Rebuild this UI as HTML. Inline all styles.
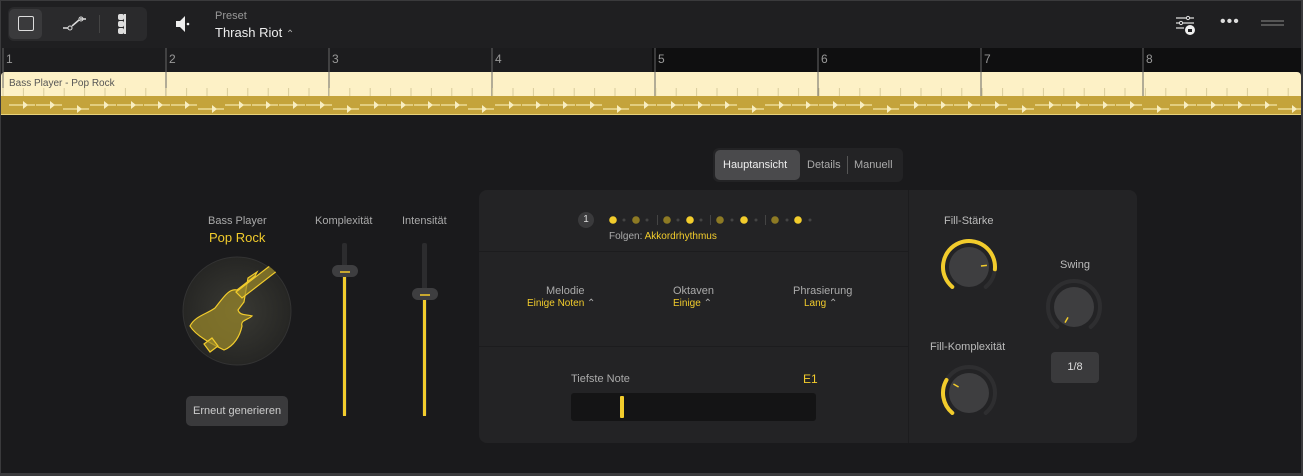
<!DOCTYPE html>
<html><head><meta charset="utf-8"><style>
*{margin:0;padding:0;box-sizing:border-box}
body{width:1303px;height:476px;background:#3a3a3c;font-family:"Liberation Sans",sans-serif;overflow:hidden;position:relative}
#f{position:absolute;left:1px;top:1px;width:1300px;height:472px;background:#1a1a1c;overflow:hidden}
.a{position:absolute}
.t{position:absolute;font-size:11px;color:#b8b8b8;white-space:nowrap}
.y{color:#f2cc2c}
</style></head><body><div id="f">
<div class="a" style="left:0;top:0;width:1300px;height:47px;background:#1f1f21"></div>
<div class="a" style="left:7px;top:6px;width:139px;height:34px;background:#2a2a2c;border-radius:6px"></div>
<div class="a" style="left:8px;top:8px;width:33px;height:30px;background:#3a3a3c;border-radius:5px"></div>
<div class="a" style="left:17px;top:15px;width:16px;height:15px;border:1.5px solid #ddd;border-radius:2px"></div>
<svg class="a" style="left:60px;top:12px" width="28" height="22"><path d="M2 15h5M11 13l7-6M19 6h6" stroke="#ddd" stroke-width="1.5" fill="none"/><circle cx="9" cy="15" r="2" stroke="#ddd" fill="none"/><circle cx="20" cy="6" r="2" stroke="#ddd" fill="none"/></svg>
<div class="a" style="left:98px;top:14px;width:1px;height:18px;background:#444"></div>
<svg class="a" style="left:114px;top:12px" width="14" height="24"><rect x="3" y="1" width="6" height="6" rx="2" fill="#ddd"/><rect x="3" y="8" width="6" height="6" rx="2" fill="#ddd"/><rect x="3" y="15" width="6" height="6" rx="2" fill="#ddd"/><rect x="9" y="1" width="2" height="20" fill="#ddd"/></svg>
<svg class="a" style="left:174px;top:14px" width="16" height="18"><path d="M1 6h4l5-5v16l-5-5H1z" fill="#eee"/><circle cx="13" cy="9" r="1.3" fill="#eee"/></svg>
<div class="t" style="left:214px;top:9px;font-size:11px;color:#999">Preset</div>
<div class="t" style="left:214px;top:24px;font-size:13px;color:#eee">Thrash Riot <span style="font-size:10px;color:#aaa">⌃</span></div>
<svg class="a" style="left:1174px;top:13px" width="24" height="22"><path d="M1 4h18M1 9h18M1 14h8" stroke="#ddd" stroke-width="1.3"/><circle cx="13" cy="4" r="1.6" fill="#1f1f21" stroke="#ddd"/><circle cx="6" cy="9" r="1.6" fill="#1f1f21" stroke="#ddd"/><circle cx="15" cy="16" r="5" fill="#eee"/><rect x="13" y="15" width="4" height="3" fill="#1f1f21"/></svg>
<div class="t" style="left:1219px;top:12px;font-size:16px;color:#ddd;letter-spacing:1px">•••</div>
<div class="a" style="left:1260px;top:19px;width:23px;height:2px;background:#555"></div>
<div class="a" style="left:1260px;top:23px;width:23px;height:2px;background:#555"></div>
<div class="a" style="left:0;top:47px;width:651px;height:24px;background:#1c1c1e"></div>
<div class="a" style="left:651px;top:47px;width:649px;height:24px;background:#0f0f10"></div>
<div class="a" style="left:0;top:71px;width:1300px;height:24px;background:#fdf1c6;border-radius:4px 4px 0 0"></div>
<div class="a" style="left:0;top:95px;width:1300px;height:19px;background:#c4a33b;border-bottom:1px solid #e8d27a"></div>
<div class="t" style="left:8px;top:77px;font-size:10px;color:#555">Bass Player - Pop Rock</div>
<svg class="a" style="left:0;top:47px" width="1300" height="70" id="rs"></svg>
<div class="a" style="left:712px;top:147px;width:190px;height:34px;background:#232325;border-radius:6px"></div>
<div class="a" style="left:714px;top:149px;width:85px;height:30px;background:#4a4a4c;border-radius:5px"></div>
<div class="t" style="left:722px;top:158px;color:#eee">Hauptansicht</div>
<div class="t" style="left:806px;top:158px;color:#aaa">Details</div>
<div class="a" style="left:846px;top:155px;width:1px;height:18px;background:#555"></div>
<div class="t" style="left:853px;top:158px;color:#aaa">Manuell</div>
<div class="t" style="left:207px;top:214px;color:#aaa">Bass Player</div>
<div class="t y" style="left:208px;top:229px;font-size:13px">Pop Rock</div>
<svg class="a" style="left:181px;top:255px" width="110" height="110"><defs><clipPath id="c"><circle cx="55" cy="55" r="55"/></clipPath><radialGradient id="g"><stop offset="0" stop-color="#3a3a34"/><stop offset="1" stop-color="#262624"/></radialGradient></defs><circle cx="55" cy="55" r="54" fill="url(#g)" stroke="#333"/><g clip-path="url(#c)" fill="#9c8a2a" fill-opacity=".7" stroke="#f2cc2c" stroke-width="1.2"><path d="M66 22l9-6-2 4-18 14c-8-2-14 8-22 18-8 6-20 8-25 18 6 10 22 18 34 24 10-4 16-14 18-24-2-6 6-6 10-10-6-2-12 0-14-6l6-8z"/><path d="M54 36L98 2l6 6-44 34z"/><path d="M22 88l8-6 6 8-8 6z"/></g></svg>
<div class="a" style="left:185px;top:395px;width:102px;height:30px;background:#3a3a3c;border-radius:5px"></div>
<div class="t" style="left:192px;top:404px;color:#ccc">Erneut generieren</div>
<div class="t" style="left:314px;top:214px;color:#aaa">Komplexität</div>
<div class="t" style="left:401px;top:214px;color:#aaa">Intensität</div>
<div class="a" style="left:341px;top:242px;width:5px;height:173px;background:#2c2c2e;border-radius:2px"></div>
<div class="a" style="left:342px;top:271px;width:3px;height:144px;background:#f2cc2c"></div>
<div class="a" style="left:331px;top:264px;width:26px;height:12px;background:#3e3e40;border-radius:6px"></div>
<div class="a" style="left:339px;top:270px;width:10px;height:2px;background:#c8a830"></div>
<div class="a" style="left:421px;top:242px;width:5px;height:173px;background:#2c2c2e;border-radius:2px"></div>
<div class="a" style="left:422px;top:294px;width:3px;height:121px;background:#f2cc2c"></div>
<div class="a" style="left:411px;top:287px;width:26px;height:12px;background:#3e3e40;border-radius:6px"></div>
<div class="a" style="left:419px;top:293px;width:10px;height:2px;background:#c8a830"></div>
<div class="a" style="left:478px;top:189px;width:658px;height:253px;background:#232325;border-radius:8px"></div>
<div class="a" style="left:478px;top:250px;width:430px;height:1px;background:#1c1c1e"></div>
<div class="a" style="left:478px;top:345px;width:430px;height:1px;background:#1c1c1e"></div>
<div class="a" style="left:907px;top:189px;width:1px;height:253px;background:#1c1c1e"></div>
<div class="a" style="left:577px;top:211px;width:16px;height:16px;border-radius:8px;background:#3a3a3c;color:#ddd;font-size:10px;text-align:center;line-height:16px">1</div>
<svg class="a" style="left:600px;top:210px" width="220" height="18"><g fill="#f2cc2c"><circle cx="12" cy="9" r="3.8"/><circle cx="89" cy="9" r="3.8"/><circle cx="143" cy="9" r="3.8"/><circle cx="197" cy="9" r="3.8"/></g><g fill="#8d7a24"><circle cx="35" cy="9" r="3.8"/><circle cx="66" cy="9" r="3.8"/><circle cx="119" cy="9" r="3.8"/><circle cx="174" cy="9" r="3.8"/></g><g fill="#444"><circle cx="23" cy="9" r="1.5"/><circle cx="46" cy="9" r="1.5"/><circle cx="77" cy="9" r="1.5"/><circle cx="100" cy="9" r="1.5"/><circle cx="131" cy="9" r="1.5"/><circle cx="155" cy="9" r="1.5"/><circle cx="186" cy="9" r="1.5"/><circle cx="209" cy="9" r="1.5"/><rect x="56" y="4" width="1" height="10"/><rect x="109" y="4" width="1" height="10"/><rect x="164" y="4" width="1" height="10"/></g></svg>
<div class="t" style="left:608px;top:230px;font-size:10px;color:#aaa">Folgen: <span class="y">Akkordrhythmus</span></div>
<div class="t" style="left:545px;top:284px;color:#aaa">Melodie</div>
<div class="t y" style="left:526px;top:297px;font-size:10px">Einige Noten <span style="color:#aaa">⌃</span></div>
<div class="t" style="left:672px;top:284px;color:#aaa">Oktaven</div>
<div class="t y" style="left:672px;top:297px;font-size:10px">Einige <span style="color:#aaa">⌃</span></div>
<div class="t" style="left:792px;top:284px;color:#aaa">Phrasierung</div>
<div class="t y" style="left:803px;top:297px;font-size:10px">Lang <span style="color:#aaa">⌃</span></div>
<div class="t" style="left:570px;top:372px;color:#aaa">Tiefste Note</div>
<div class="t y" style="left:802px;top:371px;font-size:12px">E1</div>
<div class="a" style="left:570px;top:392px;width:245px;height:28px;background:#141415;border-radius:3px"></div>
<div class="a" style="left:619px;top:395px;width:4px;height:22px;background:#f2cc2c;border-radius:1px"></div>
<div class="t" style="left:943px;top:214px;color:#bbb">Fill-Stärke</div>
<div class="t" style="left:929px;top:340px;color:#bbb">Fill-Komplexität</div>
<div class="t" style="left:1059px;top:258px;color:#bbb">Swing</div>
<svg class="a" style="left:938px;top:236px" width="60" height="60" id="k1"></svg>
<svg class="a" style="left:938px;top:362px" width="60" height="60" id="k2"></svg>
<svg class="a" style="left:1043px;top:276px" width="60" height="60" id="k3"></svg>
<div class="a" style="left:1050px;top:351px;width:48px;height:31px;background:#3a3a3c;border-radius:4px;color:#ddd;font-size:11px;text-align:center;line-height:31px">1/8</div>
</div>
<script>
var rs=document.getElementById('rs'),s='';
var bars=[0,163,326,489,652,815,978,1140];
bars.forEach(function(x,i){s+='<line x1="'+(x+2)+'" y1="0" x2="'+(x+2)+'" y2="48" stroke="#666"/><text x="'+(x+5)+'" y="15" fill="#999" font-size="12" font-family="Liberation Sans">'+(i+1)+'</text>';});
for(var x=2;x<1300;x+=20.4){s+='<line x1="'+x+'" y1="40" x2="'+x+'" y2="48" stroke="#d8cc9c"/>';}
var ys=[58,58,56,56,54,54,55,56];
for(var i=0;i<48;i++){var x=8+i*27,y=(i%5==2)?61:57;s+='<line x1="'+x+'" y1="'+y+'" x2="'+(x+26)+'" y2="'+y+'" stroke="#f4e6a8" stroke-width="1.3"/><path d="M'+(x+14)+' '+(y-4)+'l5 4-5 4z" fill="#f8eec0"/>';}
rs.innerHTML=s;
function k(id,a0,a1,ang){var e=document.getElementById(id),cx=30,cy=30,r=26;function p(a){a=(a-90)*Math.PI/180;return [cx+r*Math.cos(a),cy+r*Math.sin(a)];}
function arc(b,c,col){var P=p(b),Q=p(c);return '<path d="M'+P[0]+' '+P[1]+'A'+r+' '+r+' 0 '+((c-b)>180?1:0)+' 1 '+Q[0]+' '+Q[1]+'" stroke="'+col+'" stroke-width="4" fill="none" stroke-linecap="round"/>';}
var h=arc(-140,140,'#2e2e30');if(a1>a0)h+=arc(a0,a1,'#f2cc2c');h+='<circle cx="30" cy="30" r="20" fill="#3e3e40"/>';
var A=(ang-90)*Math.PI/180;h+='<line x1="'+(30+12*Math.cos(A))+'" y1="'+(30+12*Math.sin(A))+'" x2="'+(30+18*Math.cos(A))+'" y2="'+(30+18*Math.sin(A))+'" stroke="#f2cc2c" stroke-width="1.5"/>';e.innerHTML=h;}
k('k1',-140,95,85);k('k2',-140,-60,-60);k('k3',-140,-140,-150);
</script>
</body></html>
